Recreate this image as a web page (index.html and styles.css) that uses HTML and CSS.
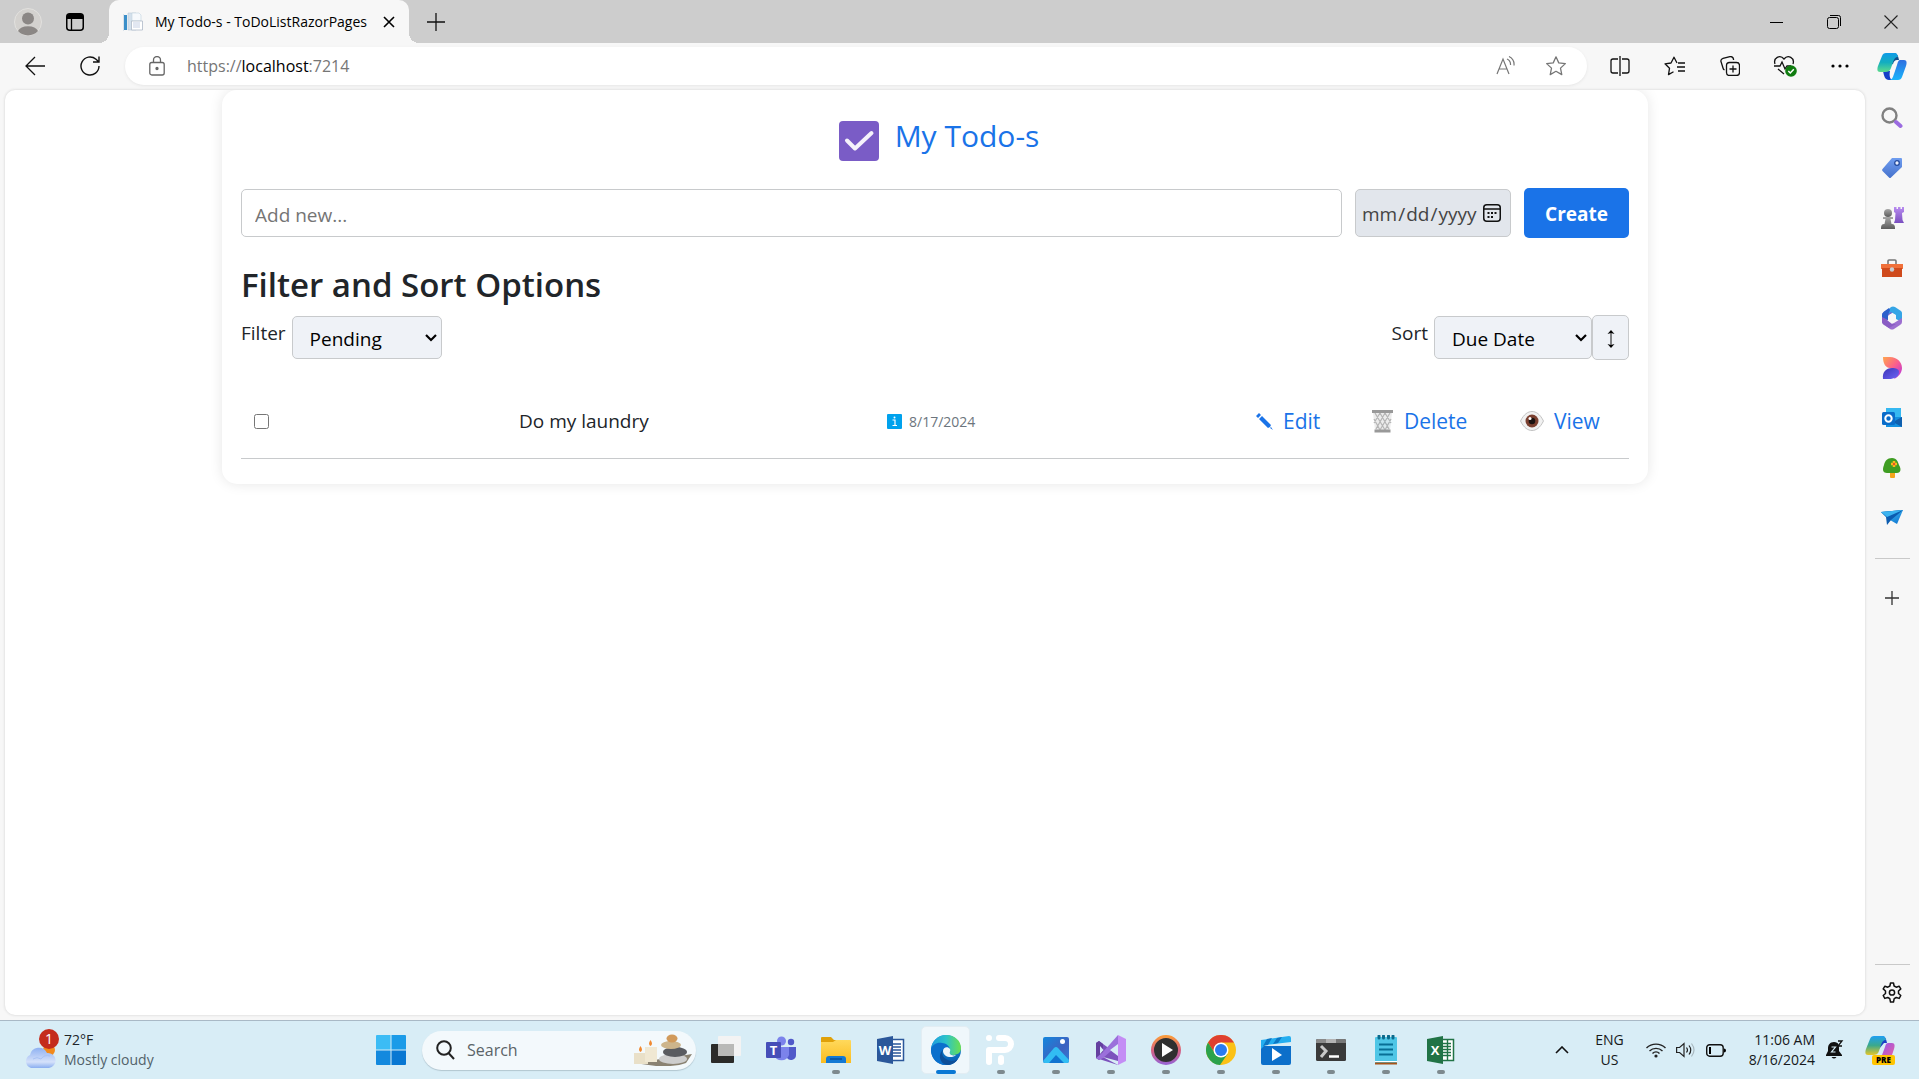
FILE: index.html
```html
<!DOCTYPE html>
<html lang="en">
<head>
<meta charset="utf-8">
<title>My Todo-s - ToDoListRazorPages</title>
<link rel="stylesheet" href="styles.css">
</head>
<body>
<svg class="defs" width="0" height="0" aria-hidden="true">
  <defs>
    <linearGradient id="purple" x1="0" y1="0" x2="0" y2="1"><stop offset="0" stop-color="#b98cf0"/><stop offset="1" stop-color="#7a4fc0"/></linearGradient>
    <linearGradient id="gray" x1="0" y1="0" x2="0" y2="1"><stop offset="0" stop-color="#a8a8a8"/><stop offset="1" stop-color="#5c5c5c"/></linearGradient>
    <linearGradient id="tag" x1="0" y1="0" x2="0" y2="1"><stop offset="0" stop-color="#6f9df0"/><stop offset="1" stop-color="#4672cc"/></linearGradient>
    <linearGradient id="teal" x1="0" y1="0" x2="0" y2="1"><stop offset="0" stop-color="#0f9be8"/><stop offset=".5" stop-color="#14aebf"/><stop offset="1" stop-color="#5ddb8c"/></linearGradient>
    <linearGradient id="blue" x1="0" y1="0" x2="0" y2="1"><stop offset="0" stop-color="#2f6fe0"/><stop offset="1" stop-color="#18b4fb"/></linearGradient>
    <linearGradient id="designer" x1="0" y1="0" x2="1" y2="1"><stop offset="0" stop-color="#ffa64d"/><stop offset=".5" stop-color="#fb5f8c"/><stop offset="1" stop-color="#b02fe8"/></linearGradient>
    <linearGradient id="indigo" x1="0" y1="0" x2="1" y2="1"><stop offset="0" stop-color="#3b34b8"/><stop offset="1" stop-color="#6d63f5"/></linearGradient>
    <linearGradient id="sky" x1="0" y1="0" x2="1" y2="1"><stop offset="0" stop-color="#4cc8f5"/><stop offset="1" stop-color="#0b6fcf"/></linearGradient>
    <linearGradient id="edgeTop" x1="0" y1="0" x2="1" y2="0"><stop offset="0" stop-color="#1d9be0"/><stop offset=".5" stop-color="#2cc3c9"/><stop offset="1" stop-color="#6be04f"/></linearGradient>
    <linearGradient id="edgeLow" x1="0" y1="0" x2="0" y2="1"><stop offset="0" stop-color="#1a9de0"/><stop offset="1" stop-color="#0658b0"/></linearGradient>
    <linearGradient id="folder" x1="0" y1="0" x2="0" y2="1"><stop offset="0" stop-color="#ffd95c"/><stop offset="1" stop-color="#fbbc1f"/></linearGradient>
    <linearGradient id="ring" x1="0" y1="0" x2="0" y2="1"><stop offset="0" stop-color="#f99a3c"/><stop offset=".5" stop-color="#d9617f"/><stop offset="1" stop-color="#9a63cf"/></linearGradient>
    <linearGradient id="cloud" x1="0" y1="0" x2="0" y2="1"><stop offset="0" stop-color="#8fb1f2"/><stop offset=".7" stop-color="#d5e1fa"/><stop offset="1" stop-color="#8aaef0"/></linearGradient>
    <linearGradient id="photo" x1="0" y1="0" x2="1" y2="1"><stop offset="0" stop-color="#1387dd"/><stop offset=".6" stop-color="#3f62c0"/><stop offset="1" stop-color="#2d7fd8"/></linearGradient>
    <linearGradient id="pinkish" x1="0" y1="0" x2="1" y2="1"><stop offset="0" stop-color="#8b52f4"/><stop offset="1" stop-color="#f2649a"/></linearGradient>
    <linearGradient id="pre" x1="0" y1="0" x2="0" y2="1"><stop offset="0" stop-color="#1e9ff2"/><stop offset=".5" stop-color="#3ba98c"/><stop offset="1" stop-color="#e5c62a"/></linearGradient>
  </defs>
</svg>

<header class="titlebar">
  <button class="profile" aria-label="Profile"><svg width="28" height="28" viewBox="0 0 28 28"><circle cx="14" cy="14" r="13.500" fill="#d3d1ce" stroke="#e2e1de"/><circle cx="14" cy="10.500" r="6" fill="#8b8785"/><path d="M4 23a10.500 7 0 0 1 20 0a13.500 13.500 0 0 1-20 0z" fill="#8b8785"/></svg></button>
  <button class="workspaces" aria-label="Tab actions"><svg width="18" height="18" viewBox="0 0 18 18"><rect x=".75" y=".75" width="16.500" height="16.500" rx="3" fill="none" stroke="#000" stroke-width="1.500"/><path d="M1 6V3.500A2.500 2.500 0 0 1 3.500 1h11A2.500 2.500 0 0 1 17 3.500V6z"/><path d="M5.500 6v11" stroke="#000" stroke-width="1.300"/></svg></button>
  <div class="tab">
    <svg width="20" height="20" viewBox="0 0 20 20"><path d="M0 2h1v17H0z" fill="#d9e2ea"/><path d="M1 3h3v15H1z" fill="#3b8fc9"/><path d="M5 1h8v17H5z" fill="#d3e0ec" stroke="#b9cad9" stroke-width=".6"/><path d="M9 1h7l2 2v6H9z" fill="#f6f9fc" stroke="#c5d3df" stroke-width=".6"/><path d="M8.500 9h11v9h-11z" fill="#fff" stroke="#aeb9c8" stroke-width=".8"/><path d="M10 11h7M10 13h7M10 15h7" stroke="#b6c3dd" stroke-width=".8"/></svg>
    <span class="tab-title">My Todo-s - ToDoListRazorPages</span>
    <button aria-label="Close tab"><svg width="12" height="12" viewBox="0 0 12 12"><path d="M1 1l10 10M11 1L1 11" stroke="#000" stroke-width="1.600"/></svg></button>
  </div>
  <button class="new-tab" aria-label="New tab"><svg width="18" height="18" viewBox="0 0 18 18"><path d="M9 0v18M0 9h18" stroke="#111" stroke-width="1.300"/></svg></button>
  <div class="window-controls">
    <button aria-label="Minimize"><svg width="14" height="14" viewBox="0 0 14 14"><path d="M0 7.500h13" stroke="#000"/></svg></button>
    <button aria-label="Restore"><svg width="14" height="14" viewBox="0 0 14 14" fill="none" stroke="#000"><rect x=".5" y="2.500" width="11" height="11" rx="2"/><path d="M3 .5h8.500a2 2 0 0 1 2 2V11"/></svg></button>
    <button aria-label="Close"><svg width="14" height="14" viewBox="0 0 14 14"><path d="M.5.5l13 13M13.500.5l-13 13" stroke="#222" stroke-width="1.100"/></svg></button>
  </div>
</header>

<nav class="toolbar">
  <button class="nav-btn" aria-label="Back"><svg width="20" height="20" viewBox="0 0 20 20" fill="none" stroke="#111" stroke-width="1.300"><path d="M20 10H1M10 1L1 10l9 9"/></svg></button>
  <button class="nav-btn" aria-label="Refresh"><svg width="20" height="20" viewBox="0 0 20 20" fill="none" stroke="#111" stroke-width="1.400"><path d="M19 10a9 9 0 1 1-3-6.700L19 6M19 .5V6h-6"/></svg></button>
  <div class="address">
    <svg width="16" height="20" viewBox="0 0 16 20" fill="none" stroke="#666" stroke-width="1.300"><rect x=".8" y="6.500" width="14.400" height="12.500" rx="2"/><path d="M4.500 6.500V4a3.500 3.500 0 0 1 7 0v2.500"/><circle cx="8" cy="12.500" r="1" fill="#666"/></svg>
    <a class="url" href="https://localhost:7214"><span>https://</span><b>localhost</b><span>:7214</span></a>
    <button aria-label="Read aloud"><svg width="20" height="20" viewBox="0 0 20 20" fill="none" stroke="#767676" stroke-width="1.200"><path d="M1 18L7 3l6 15M3 13h8"/><path d="M11 3a6 6 0 0 1 3.500 6M13 .5a9 9 0 0 1 5 9"/></svg></button>
    <button aria-label="Add to favorites"><svg width="22" height="22" viewBox="0 0 24 24" fill="none" stroke="#767676" stroke-width="1.400" stroke-linejoin="round"><path d="M12 2l3 6.600 7.200.8-5.300 4.900 1.400 7.100-6.300-3.600-6.300 3.600 1.400-7.100L1.800 9.400 9 8.600z"/></svg></button>
  </div>
  <div class="tools">
    <button aria-label="Split screen"><svg width="20" height="20" viewBox="0 0 20 20" fill="none" stroke="#111" stroke-width="1.300"><path d="M8 3H3a2 2 0 0 0-2 2v10a2 2 0 0 0 2 2h5M12 3h5a2 2 0 0 1 2 2v10a2 2 0 0 1-2 2h-5M10 0v20"/></svg></button>
    <button aria-label="Favorites"><svg width="22" height="20" viewBox="0 0 22 20" fill="none" stroke="#111" stroke-width="1.300" stroke-linejoin="round"><path d="M13 7l-3-5.800L7 7l-6 .8 4.500 4.500L4.500 18.600l5-2.800M14 7h7M13 11h8M14 15h7"/></svg></button>
    <button aria-label="Collections"><svg width="20" height="20" viewBox="0 0 20 20" fill="none" stroke="#111" stroke-width="1.300"><rect x="6.500" y="6.500" width="13" height="13" rx="3"/><path d="M13 9.500v7M9.500 13h7M4.500 14A3 3 0 0 1 3 12L.8 5A3 3 0 0 1 3 2.300l7-1.700a3 3 0 0 1 3.500 2.500v1"/></svg></button>
    <button aria-label="Browser essentials"><svg width="24" height="22" viewBox="0 0 24 22" fill="none" stroke="#111" stroke-width="1.300"><path d="M2 9C0 3 7-1 11 4c4-5 11-1 9 5M1 11h6l2-4 3 7 2-3h4M5 14l6 5"/><circle cx="18" cy="16" r="5.800" fill="#107c10" stroke="none"/><path d="M15.300 16l2 2 3.500-3.700" stroke="#fff" stroke-width="1.500"/></svg></button>
    <button aria-label="Settings and more"><svg width="18" height="4" viewBox="0 0 18 4"><circle cx="2" cy="2" r="1.600"/><circle cx="9" cy="2" r="1.600"/><circle cx="16" cy="2" r="1.600"/></svg></button>
  </div>
  <button class="copilot" aria-label="Copilot"><svg width="30" height="27" viewBox="0 0 30 27"><path d="M6 18h7c-1 5 0 9 3 9h-4c-4 0-5-4-6-9z" fill="#1540c8"/><path d="M16 0c4 0 5 2 6 7h-2c-2 0-3 1-4 4l-3 1z" fill="#12508c"/><path d="M9 0h9c2 0 2 1 3 4-3 0-4 2-5 5l-2 6c-1 3-3 4-6 4H3c-3 0-3-3-2-6L5 3c.7-2 2-3 4-3z" fill="url(#teal)"/><path d="M21 27h-9c3 0 4-3 5-6l3-9c1-3 1-5 4-5h3c3 0 3 3 2 6l-4 11c-.7 2-2 3-4 3z" fill="url(#blue)"/></svg></button>
</nav>

<div class="browser-body">
  <main class="viewport">
    <section class="card">
      <h1 class="brand">
        <svg width="40" height="40" viewBox="0 0 40 40"><rect width="40" height="40" rx="4" fill="#7a5cc6"/><path d="M8 19.500l8 8L32.500 12" fill="none" stroke="#f5f2fb" stroke-width="4" stroke-linecap="round" stroke-linejoin="round"/></svg>
        <span>My Todo-s</span>
      </h1>
      <form class="create-form">
        <input class="new-todo" type="text" placeholder="Add new..." aria-label="Add new">
        <span class="due"><input type="date" aria-label="Due date"><svg width="18" height="18" viewBox="0 0 18 18" fill="none" stroke="#111" stroke-width="1.500"><rect x=".75" y=".75" width="16.500" height="16.500" rx="3"/><path d="M1 5h16"/><path d="M4.500 9h2M8 9h2M11.500 9h2M4.500 13h2M8 13h2" stroke-width="2"/></svg></span>
        <button class="create" type="button">Create</button>
      </form>
      <h2>Filter and Sort Options</h2>
      <div class="options">
        <div class="option">
          <label for="filter">Filter</label>
          <span class="select filter-select"><select id="filter"><option>Pending</option></select><svg width="12" height="8" viewBox="0 0 12 8"><path d="M1 1l5 5 5-5" fill="none" stroke="#000" stroke-width="2.200"/></svg></span>
        </div>
        <div class="option">
          <label for="sort">Sort</label>
          <span class="select sort-select"><select id="sort"><option>Due Date</option></select><svg width="12" height="8" viewBox="0 0 12 8"><path d="M1 1l5 5 5-5" fill="none" stroke="#000" stroke-width="2.200"/></svg></span>
          <button class="direction" type="button" aria-label="Toggle sort direction"><svg width="8" height="18" viewBox="0 0 8 18"><path d="M4 2v14" stroke="#111"/><path d="M4 0l3.500 4L4 3 .5 4zM4 18l3.500-4L4 15l-3.500-1z"/></svg></button>
        </div>
      </div>
      <ul class="todos">
        <li class="todo">
          <input id="todo-1" type="checkbox">
          <label for="todo-1">Do my laundry</label>
          <span class="date"><svg width="15" height="15" viewBox="0 0 15 15"><rect width="15" height="15" rx="1" fill="#00a2ed"/><path d="M5.500 6H8v5.500M5.500 11.500h4.500" fill="none" stroke="#fff" stroke-width="1.200"/><circle cx="7.500" cy="3.500" r="1" fill="#fff"/></svg>8/17/2024</span>
          <a href="#edit"><svg width="17" height="17" viewBox="0 0 17 17" fill="#1a73e8"><path d="M0 3l3-3 2 2-3 3zM3 6l3-3 9 9-1 2-2 1zM15 14l2 3-3-2z"/></svg>Edit</a>
          <a href="#delete"><svg width="23" height="23" viewBox="0 0 23 23"><path d="M2 3h19l-2 17H4z" fill="#ececec"/><path d="M4 3l10 17M9 3l9 16M14 3l6 10M3 9l6 11M19 3L9 20M14 3L5 19M9 3L3 13M20 9l-6 11" stroke="#b5b5b5" stroke-width="1.200"/><path d="M1 0h21v3H1zM3.500 19.500h16v3h-16z" fill="#999"/></svg>Delete</a>
          <a href="#view"><svg width="24" height="20" viewBox="0 0 24 20"><path d="M.5 10C4 3 8 .5 12 .5S20 3 23.500 10C20 17 16 19.500 12 19.500S4 17 .5 10z" fill="#f1f1f1" stroke="#b5b5b5" stroke-width=".8"/><circle cx="12" cy="10" r="6.500" fill="#7b4030"/><circle cx="12" cy="10" r="3.300" fill="#1b1210"/><circle cx="10" cy="7.500" r="1.500" fill="#fff"/></svg>View</a>
        </li>
      </ul>
    </section>
  </main>

  <aside class="sidebar">
    <button aria-label="Search"><svg width="22" height="22" viewBox="0 0 22 22"><circle cx="8.500" cy="8.500" r="7" fill="none" stroke="#808080" stroke-width="2.400"/><path d="M15 15l4.500 4" stroke="#9b6be0" stroke-width="4" stroke-linecap="round"/></svg></button>
    <button aria-label="Shopping"><svg width="22" height="22" viewBox="0 0 22 22"><path d="M11 1l9 0q1 0 1 1l0 8L10 20.500q-1 1-2 0L1.500 14q-1-1 0-2z" fill="url(#tag)"/><circle cx="16" cy="6" r="2.300" fill="#eaf0ff" stroke="#234a9c" stroke-width="1.300"/></svg></button>
    <button aria-label="Games"><svg width="24" height="24" viewBox="0 0 24 24"><path d="M14 1h2.500v2H18V1h2.500v2H22V1h2v5l-2 1 .5 7 1.500 3H14l1-3 .5-7-1.500-1z" fill="url(#purple)"/><circle cx="8" cy="7" r="4" fill="url(#gray)"/><path d="M3 11h10v2H3zM5.500 13h5l1 5H4.500zM1 22q0-4 3-4h8q3 0 3 4v1H1z" fill="url(#gray)"/></svg></button>
    <button aria-label="Tools"><svg width="24" height="20" viewBox="0 0 24 20"><path d="M8 6V3q0-1 1-1h6q1 0 1 1v3" fill="none" stroke="#777" stroke-width="1.600"/><path d="M1 6h22v5H1z" fill="#f0703a"/><path d="M2 10h20v9H2z" fill="#cf4a1c"/><circle cx="12" cy="11.500" r="2.200" fill="#c9ccd0"/></svg></button>
    <button aria-label="Microsoft 365"><svg width="24" height="24" viewBox="0 0 24 24"><path d="M13 1L4 6Q2 7 2 9v8l6-3v-4l8-6z" fill="#7468cf"/><path d="M11 1q2-1 4 0l6 4q1 1 1 2v9l-6-3V9l-5-3-3 2 1-5z" fill="#35a5e6"/><path d="M22 12v4q0 2-2 3l-6 4q-2 1-4 0l-4-3 8-3z" fill="#9c6fd0"/><path d="M2 14v2q0 2 2 3l5 3 7-4-4 0-5-4V8L2 11z" fill="#8a5cc4"/><path d="M9 2L4 5.500Q2 7 2 9v2l6 3V9l2-5z" fill="#2c60cc"/><circle cx="12" cy="12" r="4" fill="#f7f7f7"/></svg></button>
    <button aria-label="Designer"><svg width="22" height="22" viewBox="0 0 22 22"><path d="M2 0h7c7 0 12 5 12 11 0 5-4 9-8 11 4-5 1-11-4-11C5 11 2 7 2 0z" fill="url(#designer)"/><path d="M2 22c-1-7 3-11 9-11 4 0 7 1 7 4 0 5-5 7-10 7z" fill="url(#indigo)"/></svg></button>
    <button aria-label="Outlook"><svg width="22" height="22" viewBox="0 0 22 22"><path d="M5 1h15v10H5z" fill="#35b8f1"/><path d="M5 10h16v10H5z" fill="#1490df"/><path d="M12 15l9-5v10z" fill="#0f5fae"/><rect x="1" y="5" width="13" height="13" rx="1.500" fill="#0a6cc9"/><circle cx="7.500" cy="11.500" r="3.200" fill="none" stroke="#fff" stroke-width="2"/></svg></button>
    <button aria-label="Tree"><svg width="20" height="22" viewBox="0 0 20 22"><path d="M8 14h5v6q0 1-1 1H9q-1 0-1-1z" fill="#f4a51c"/><path d="M10 1c5 0 6 4 7 7 3 5 1 8-2 8H5c-4 0-5-3-3-8 1-4 3-7 8-7z" fill="#3f9d22"/><path d="M12 4v6M9 7h6" stroke="#ffb81c" stroke-width="2.500"/><circle cx="12" cy="7" r="1.200" fill="#e0532a"/></svg></button>
    <button aria-label="Drop"><svg width="22" height="20" viewBox="0 0 22 20"><path d="M0 4l22-2-6 14-7-4z" fill="url(#sky)"/><path d="M0 4l5 5 17-7zM5 9l1 8 4-5 12-10z" fill="#0c5cb0"/><path d="M0 4l22-2L6 9z" fill="#3cb4f0"/></svg></button>
    <hr>
    <button class="add" aria-label="Customize"><svg width="16" height="16" viewBox="0 0 16 16"><path d="M8 1v14M1 8h14" stroke="#333" stroke-width="1.300"/></svg></button>
    <div class="sidebar-end">
      <hr>
      <button aria-label="Settings"><svg width="22" height="22" viewBox="0 0 22 22" fill="none" stroke="#111" stroke-width="1.500" stroke-linejoin="round"><path d="M9.500 1h3l.6 3 2.100 1.200 2.900-1 1.700 2.700L17.500 9v2.500l2.300 2-1.600 2.900-3-.9-2 1.200-.7 3.300h-3l-.7-3.300-2-1.200-3 .9L2.200 13.500l2.300-2V9L2.200 6.900l1.700-2.700 2.900 1L8.900 4z"/><circle cx="11" cy="10.500" r="2.600"/></svg></button>
    </div>
  </aside>
</div>

<footer class="taskbar">
  <button class="weather">
    <span class="weather-icon"><svg width="32" height="26" viewBox="0 0 32 26"><circle cx="25" cy="7" r="6" fill="#f28a1c"/><path d="M7 25a7 7 0 0 1-1-13 9 9 0 0 1 17-2 7.500 7.500 0 0 1 2 15z" fill="url(#cloud)"/><path d="M9 16a7 7 0 0 1 8 0 8 8 0 0 1 9-3" fill="none" stroke="#a9c2f4"/></svg><span class="badge">1</span></span>
    <span class="weather-text"><span>72°F</span><span class="muted">Mostly cloudy</span></span>
  </button>
  <button class="app" aria-label="Start"><svg width="30" height="30" viewBox="0 0 30 30"><path d="M0 1q0-1 1-1h13.500v14.500H0z" fill="#3cbcf5"/><path d="M15.500 0H29q1 0 1 1v13.500H15.500z" fill="#1b9be8"/><path d="M0 15.500h14.500V30H1q-1 0-1-1z" fill="#1389de"/><path d="M15.500 15.500H30V29q0 1-1 1H15.500z" fill="#0977d2"/></svg></button>
  <div class="search">
    <svg width="19" height="20" viewBox="0 0 19 20" fill="none" stroke="#222" stroke-width="2"><circle cx="8" cy="8" r="6.800"/><path d="M12.500 13l5.500 6"/></svg>
    <input type="search" placeholder="Search" aria-label="Search">
    <svg width="60" height="32" viewBox="0 0 60 32"><path d="M2 29l40-6 18-3-6 9q-10 4-30 3z" fill="#8a8272"/><path d="M2 19h14v11H2z" fill="#e9e0c8"/><path d="M13 13h12v15H13z" fill="#f0e8d3"/><path d="M8.500 12q3 4 0 6-3-2 0-6zM18.500 6q3 4 0 6-3-2 0-6z" fill="#f08a32"/><ellipse cx="41" cy="25" rx="14" ry="5" fill="#cdcdcd"/><ellipse cx="43" cy="18" rx="12" ry="5" fill="#595b60"/><ellipse cx="39" cy="11" rx="10" ry="4" fill="#cdb58c"/><ellipse cx="40" cy="4.500" rx="5.500" ry="4" fill="#d19a5b"/></svg>
  </div>
  <button class="app" aria-label="Task view"><svg width="30" height="30" viewBox="0 0 30 30"><rect y="9" width="23" height="19" rx="1" fill="#2b2b29"/><rect x="7" y="1" width="23" height="20" rx="1" fill="#f3f3f3"/><path d="M7 9h16v12H7z" fill="#b9b9b7"/></svg></button>
  <button class="app" aria-label="Teams"><svg width="30" height="28" viewBox="0 0 30 28"><circle cx="15.500" cy="5" r="4.500" fill="#7b83eb"/><circle cx="25" cy="6" r="3.200" fill="#5059c9"/><path d="M20 11h10v8a5 5 0 0 1-9 3z" fill="#5059c9"/><path d="M8 11h15v8a8 8 0 0 1-15 0z" fill="#7b83eb"/><rect y="6" width="15" height="16" rx="1" fill="#464eb8"/><text x="7.500" y="19" class="glyph">T</text></svg></button>
  <button class="app open" aria-label="File Explorer"><svg width="30" height="28" viewBox="0 0 30 28"><path d="M0 2q0-1 1-1h9l3 3h15v6H0z" fill="#e0a10a"/><path d="M0 6h12l3-2h14q1 0 1 1v22H0z" fill="url(#folder)"/><path d="M5 27v-4q0-3 3-3h14q3 0 3 3v4z" fill="#1379d4"/><path d="M9 23h12" stroke="#0a4f9a" stroke-width="1.500"/></svg></button>
  <button class="app" aria-label="Word"><svg width="28" height="28" viewBox="0 0 28 28"><path d="M14 3.500h12.500v21H14z" fill="#fff" stroke="#2b579a" stroke-width="1.500"/><path d="M15 8h9M15 11h9M15 14h9M15 17h9M15 20h9" stroke="#2b579a" stroke-width="1.500"/><path d="M0 3l16-3v28L0 25z" fill="#2b579a"/><text x="8" y="19" class="glyph">W</text></svg></button>
  <button class="app open active" aria-label="Microsoft Edge"><svg width="30" height="30" viewBox="0 0 30 30"><circle cx="15" cy="15" r="15" fill="url(#edgeLow)"/><path d="M0 14C1 5 8 0 15 0c9 0 15 6 15 13 0 5-4 7-8 7-3 0-4-1-3-3 1-3-2-6-6-6C7 11 2 12 0 14z" fill="url(#edgeTop)"/><path d="M0 14c1-4 6-7 11-6 5 0 8 4 8 7-6-4-10 1-8 6 2 6 9 7 16 3-4 6-10 7-15 6C4 28 0 22 0 14z" fill="#0b70cc"/><path d="M13 14c-3 3-2 8 2 10 4 3 9 2 12 0-4 6-10 7-14 5-6-4-5-12 0-15z" fill="#0d4f99"/><path d="M19 14c1 2-1 3 0 5 1 1 3 2 6 1-4 4-13 2-13-4 0-4 5-5 7-2z" fill="#eef6fb"/></svg></button>
  <button class="app open" aria-label="iP"><svg width="30" height="30" viewBox="0 0 30 30" fill="none" stroke="#fff" stroke-width="6" stroke-linecap="round"><path d="M3 15v12M3 15h16a6 6 0 0 0 0-12h-6M15 23v4M3 3h0"/></svg></button>
  <button class="app open" aria-label="Photos"><svg width="26" height="26" viewBox="0 0 26 26"><rect width="26" height="26" rx="2" fill="url(#photo)"/><path d="M0 24L11 11q2-2 4 0l11 12q0 3-2 3H2q-2 0-2-2z" fill="#32bdf3"/><path d="M6 26l7-8 8 8z" fill="#1173d0"/><circle cx="19.500" cy="4.500" r="2.500" fill="#fff"/></svg></button>
  <button class="app open" aria-label="Visual Studio"><svg width="30" height="30" viewBox="0 0 30 30"><path d="M0 8l3-2 19 14v10L3 24l-3-2z" fill="#7c52bd"/><path d="M0 8l3-2 4 3v13l-4 3-3-2z" fill="#65409f"/><path d="M7 17L22 0v10L7 23l-4 2-3-2z" fill="#9b70db"/><path d="M22 0l8 4v22l-8 4z" fill="#c48df5"/><path d="M22 9v12l-8-6zM4 11v8l3.500-4zM7 22l15 8V26z" fill="#d8edf6"/></svg></button>
  <button class="app open" aria-label="Media Player"><svg width="30" height="30" viewBox="0 0 30 30"><circle cx="15" cy="15" r="13.500" fill="#303030" stroke="url(#ring)" stroke-width="3"/><path d="M11 8l11 7-11 7z" fill="#fff"/></svg></button>
  <button class="app open" aria-label="Chrome"><svg width="30" height="30" viewBox="0 0 30 30"><circle cx="15" cy="15" r="15" fill="#fbc116"/><path d="M2 7.500a15 15 0 0 1 26 0H15L9 18.500z" fill="#df4030"/><path d="M2 7.500A15 15 0 0 0 14 30l7.500-11L9 18.500z" fill="#2ba24c"/><circle cx="15" cy="15" r="7.500" fill="#fff"/><circle cx="15" cy="15" r="6" fill="#2a7bf0"/></svg></button>
  <button class="app open" aria-label="Movies"><svg width="30" height="29" viewBox="0 0 30 29"><path d="M0 10h30v17q0 2-2 2H2q-2 0-2-2z" fill="#0c6fca"/><path d="M0 4L28 0q2 0 2 2v4L4 9l-4 4z" fill="#24aef0"/><path d="M6 3l5-1-4 7-5 1zM16 2l5-1-4 6-5 1z" fill="#0d77c4"/><path d="M11 12l10 7-10 6z" fill="#fff"/></svg></button>
  <button class="app open" aria-label="Terminal"><svg width="30" height="24" viewBox="0 0 30 24"><rect y="1" width="30" height="22" rx="1.500" fill="#3a3a3a"/><path d="M0 5V2.500Q0 1 1.500 1H10v4z" fill="#8a8a8a"/><path d="M10 1h10v4H10z" fill="#b4b4b4"/><path d="M20 1h8.500Q30 1 30 2.500V5H20z" fill="#787878"/><path d="M5 8l5 5-5 6" fill="none" stroke="#c9c9c9" stroke-width="3"/><path d="M13 18.500h10" stroke="#fff" stroke-width="2.500"/></svg></button>
  <button class="app open" aria-label="Notepad"><svg width="22" height="30" viewBox="0 0 22 30"><rect y="2" width="22" height="26" rx="1" fill="#4fc6e6"/><path d="M0 26h22v1H0z" fill="#fff"/><path d="M0 27.500h22v2H0z" fill="#a5551a"/><path d="M4 9.500h14M4 14.500h14M4 19.500h14" stroke="#086f95" stroke-width="2"/><path d="M4 1v2M8.500 1v2M13.500 1v2M18 1v2" stroke="#0b6a8c" stroke-width="3" stroke-linecap="round"/></svg></button>
  <button class="app open" aria-label="Excel"><svg width="28" height="28" viewBox="0 0 28 28"><path d="M14 3.500h12.500v21H14z" fill="#fff" stroke="#217346" stroke-width="1.500"/><path d="M15 7.500h9M15 10.500h9M15 13.500h9M15 16.500h9M15 19.500h9M20.500 4v20" stroke="#217346" stroke-width="1.400"/><path d="M0 3l16-3v28L0 25z" fill="#217346"/><text x="8" y="19" class="glyph">X</text></svg></button>
  <div class="tray">
    <button aria-label="Show hidden icons"><svg width="14" height="8" viewBox="0 0 14 8"><path d="M1 7l6-6 6 6" fill="none" stroke="#111" stroke-width="1.600"/></svg></button>
    <span class="lang"><span>ENG</span><span>US</span></span>
    <span class="status">
      <svg width="20" height="16" viewBox="0 0 20 16" fill="none" stroke="#222" stroke-width="1.400"><path d="M.5 6a13.500 13.500 0 0 1 19 0M3.500 9a9.300 9.300 0 0 1 13 0M6.500 11.500a5 5 0 0 1 7 0"/><circle cx="10" cy="14" r="1.600" fill="#222" stroke="none"/></svg>
      <svg width="20" height="16" viewBox="0 0 20 16" fill="none" stroke="#222" stroke-width="1.200"><path d="M.6 5.500h3L8 1.500v13l-4.400-4h-3z"/><path d="M10.500 5.500q2 2.500 0 5M13 3.500q3.500 4.500 0 9"/><path d="M15.500 1.500q5 6.500 0 13" stroke="#a9b8bf"/></svg>
      <svg width="20" height="13" viewBox="0 0 20 13"><rect x=".7" y=".7" width="16.500" height="11.500" rx="3" fill="none" stroke="#111" stroke-width="1.400"/><path d="M3 3h2v7H3zM18 4.500q2 0 2 2t-2 2z"/></svg>
    </span>
    <span class="clock"><span>11:06 AM</span><span>8/16/2024</span></span>
    <svg width="18" height="20" viewBox="0 0 18 20"><path d="M8 2c5 0 5 4 5 6v3l3 4v1H0v-1l2-4V8c0-3 2-6 6-6zM5.500 17h5q-2.500 3-5 0z" fill="#111"/><path d="M5.500 7h4l-4 5h4" fill="none" stroke="#d8edf6" stroke-width="1.200"/><path d="M12 1h4l-4 5h4" fill="none" stroke="#111" stroke-width="1.300"/></svg>
    <button class="copilot-pre" aria-label="Copilot preview"><svg width="30" height="30" viewBox="0 0 30 30"><path d="M16 1c4 0 5 2 6 7h-3l-5 6z" fill="#1b3fc6"/><path d="M9 1h9c2 0 2 1 3 4-3 0-4 2-5 5l-2 6c-1 3-3 4-6 4H3c-3 0-3-3-2-6L5 4c.7-2 2-3 4-3z" fill="url(#pre)"/><path d="M12 26c3-1 4-3 5-6l3-8c1-3 1-4 4-4h3c3 0 3 3 2 6l-3 9z" fill="url(#pinkish)"/><rect x="7" y="20" width="23" height="10" rx="2" fill="#ffc400"/><text x="18.500" y="28" class="pre">PRE</text></svg></button>
  </div>
</footer>
</body>
</html>
```

FILE: styles.css
```css
* { box-sizing: border-box; }

body {
  margin: 0;
  min-height: 100vh;
  display: flex;
  flex-direction: column;
  font-family: "Open Sans", "Noto Sans", sans-serif;
  font-size: 19px;
  color: #212529;
  background: #f7f7f7;
}

button {
  padding: 0;
  border: 0;
  background: none;
  font: inherit;
  color: inherit;
  display: flex;
  align-items: center;
  justify-content: center;
}

svg { display: block; flex: none; }
.defs { position: absolute; }

/* Title bar */
.titlebar {
  display: flex;
  align-items: center;
  height: 43px;
  padding-left: 14px;
  background: #cdcdcd;
}
.workspaces { margin: 0 25px 0 24px; }
.tab {
  position: relative;
  display: flex;
  align-items: center;
  width: 300px;
  height: 43px;
  padding: 0 14px;
  gap: 12px;
  border-radius: 10px 10px 0 0;
  background: #f7f7f7;
  font-size: 14px;
  color: #000;
}
.tab::before,
.tab::after {
  content: "";
  position: absolute;
  bottom: 0;
  width: 10px;
  height: 10px;
}
.tab::before { left: -10px; background: radial-gradient(circle at 0 0, #cdcdcd 10px, #f7f7f7 10px); }
.tab::after { right: -10px; background: radial-gradient(circle at 100% 0, #cdcdcd 10px, #f7f7f7 10px); }
.tab-title { flex: 1; white-space: nowrap; }
.new-tab { margin-left: 18px; }
.window-controls { display: flex; margin-left: auto; }
.window-controls button { width: 57px; height: 43px; }

/* Toolbar */
.toolbar {
  display: flex;
  align-items: center;
  height: 47px;
  padding: 0 5px 1px 7px;
}
.nav-btn { width: 55px; height: 38px; }
.address {
  flex: 1;
  display: flex;
  align-items: center;
  gap: 22px;
  height: 38px;
  margin-left: 8px;
  padding: 0 17px 0 24px;
  border-radius: 19px;
  background: #fff;
  box-shadow: 0 1px 3px #e6e6e6;
}
.address button { width: 28px; }
.url {
  flex: 1;
  font-size: 16px;
  color: #767676;
  text-decoration: none;
}
.url b { font-weight: 400; color: #000; }
.tools { display: flex; margin: 0 2px 0 5px; }
.tools button { width: 55px; height: 38px; }
.copilot { width: 45px; }

/* Page and sidebar */
.browser-body { flex: 1; display: flex; }
.viewport {
  flex: 1;
  margin: 0 0 5px 5px;
  border-radius: 10px;
  background: #fff;
  box-shadow: 0 0 3px #cfcfcf;
}
.sidebar {
  display: flex;
  flex-direction: column;
  align-items: center;
  width: 54px;
  padding-top: 3px;
}
.sidebar button { width: 50px; height: 50px; }
.sidebar hr {
  width: 35px;
  margin: 15px 0 0;
  border: 0;
  border-top: 1px solid #c9c9c9;
}
.sidebar .add { margin-top: 14px; }
.sidebar-end { margin-top: auto; padding-bottom: 2px; }
.sidebar-end hr { margin: 0 auto 3px; }

/* Todo card */
.card {
  max-width: 1426px;
  margin: 0 auto;
  padding: 24px 19px 25px;
  border-radius: 15px;
  background: #fff;
  box-shadow: 0 0 13px rgba(0, 0, 0, .1);
  clip-path: inset(0 -20px -20px -20px);
}
.brand {
  display: flex;
  justify-content: center;
  gap: 16px;
  margin: 0 0 27px;
  padding-left: 8px;
  font-size: 30px;
  line-height: 44px;
  font-weight: 500;
  color: #1a73e8;
}
.brand svg { margin-top: 7px; }
.create-form {
  display: flex;
  align-items: center;
  gap: 13px;
}
.create-form input {
  height: 48px;
  border: 1px solid #c8cacc;
  border-radius: 5px;
  font: inherit;
}
.create-form .new-todo { flex: 1; padding: 3px 13px 0; }
.new-todo::placeholder { color: #757575; }
.due {
  display: grid;
  grid-template-columns: minmax(0, 1fr);
  align-items: center;
  width: 156px;
}
.due input,
.due svg { grid-area: 1 / 1; }
.due svg { justify-self: end; margin-right: 10px; pointer-events: none; }
.create-form .due input {
  width: 100%;
  min-width: 0;
  padding: 2px 5px 0;
  background: #e2e6ec;
  color: #444;
}
.due input::-webkit-calendar-picker-indicator { opacity: 0; margin-left: 0; }
.create {
  width: 105px;
  height: 50px;
  padding-top: 2px;
  border-radius: 5px;
  background: #1a73e8;
  color: #fff;
  font-weight: 700;
}
h2 {
  margin: 23px 0 6px;
  font-size: 33px;
  line-height: 48px;
  font-weight: 600;
}
.options {
  display: flex;
  justify-content: space-between;
}
.option { display: flex; align-items: center; height: 45px; }
.option label { margin-right: 6px; padding-bottom: 9px; }
.select { display: grid; align-items: center; }
.select select,
.select svg { grid-area: 1 / 1; }
.select svg { justify-self: end; margin-right: 5px; pointer-events: none; }
.select select {
  appearance: none;
  width: 100%;
  height: 43px;
  padding: 3px 17px 0;
  border: 1px solid #c8cacc;
  border-radius: 5px;
  background: #eff2f7;
  font: inherit;
  color: #000;
}
.filter-select { width: 150px; }
.sort-select { width: 158px; }
.direction {
  width: 37px;
  height: 45px;
  padding-top: 3px;
  border: 1px solid #c8cacc;
  border-radius: 5px;
  background: #eff2f7;
}
.todos { margin: 24px 0 0; padding: 0; list-style: none; }
.todo {
  display: grid;
  grid-template-columns: 265fr 368fr 369fr 115fr 149fr 109fr;
  align-items: center;
  height: 75px;
  padding-left: 13px;
  border-bottom: 1px solid #c8cacc;
}
.todo > * { min-width: 0; white-space: nowrap; }
.todo input { width: 15px; height: 15px; margin: 0; }
.todo a {
  display: flex;
  align-items: center;
  gap: 10px;
  font-size: 21px;
  color: #1a73e8;
  text-decoration: none;
}
.date {
  display: flex;
  align-items: center;
  gap: 7px;
  font-size: 14px;
  color: #6c757d;
}

/* Taskbar */
.taskbar {
  display: flex;
  align-items: center;
  height: 59px;
  border-top: 1px solid #a9b9c6;
  background: #d8edf6;
  font-size: 14px;
  line-height: 20px;
}
.weather {
  flex: 0 0 363px;
  gap: 8px;
  padding-left: 24px;
  justify-content: flex-start;
  text-align: left;
}
.weather-icon { position: relative; padding-top: 12px; }
.badge {
  position: absolute;
  top: -2px;
  right: -3px;
  width: 20px;
  height: 20px;
  border-radius: 10px;
  background: #c42b1c;
  color: #fff;
  text-align: center;
}
.weather-text, .lang, .clock { display: flex; flex-direction: column; }
.muted { color: #52626a; }
.app {
  position: relative;
  flex: 0 1 55px;
  height: 48px;
}
.active::before {
  content: "";
  position: absolute;
  inset: 0 3px;
  border-radius: 5px;
  border: 1px solid #e2edf3;
  background: #eff7fb;
}
.app svg { position: relative; }
.open::after {
  content: "";
  position: absolute;
  bottom: 0;
  width: 8px;
  height: 4px;
  border-radius: 2px;
  background: #7d898e;
}
.active::after { width: 20px; background: #0a78d4; }
.search {
  display: flex;
  align-items: center;
  gap: 12px;
  width: 274px;
  height: 39px;
  margin: 0 2px 0 4px;
  padding: 0 4px 0 14px;
  border-radius: 20px;
  background: #f3f9fc;
  box-shadow: 0 1px 1px #b2c6d0;
}
.search input {
  flex: 1;
  min-width: 0;
  padding: 0;
  border: 0;
  background: none;
  font: inherit;
  font-size: 16px;
}
.search input::placeholder { color: #5b6468; }
.glyph {
  font-size: 13px;
  font-weight: 700;
  text-anchor: middle;
  fill: #fff;
}
.pre {
  font-size: 8px;
  font-weight: 800;
  text-anchor: middle;
}
.tray {
  display: flex;
  align-items: center;
  margin-left: auto;
  padding-right: 24px;
  color: #16191b;
}
.lang { margin: 0 22px 0 26px; align-items: center; }
.status { display: flex; align-items: center; gap: 10px; }
.clock { margin: 0 11px 0 23px; align-items: flex-end; }
.copilot-pre { margin-left: 21px; }
```
